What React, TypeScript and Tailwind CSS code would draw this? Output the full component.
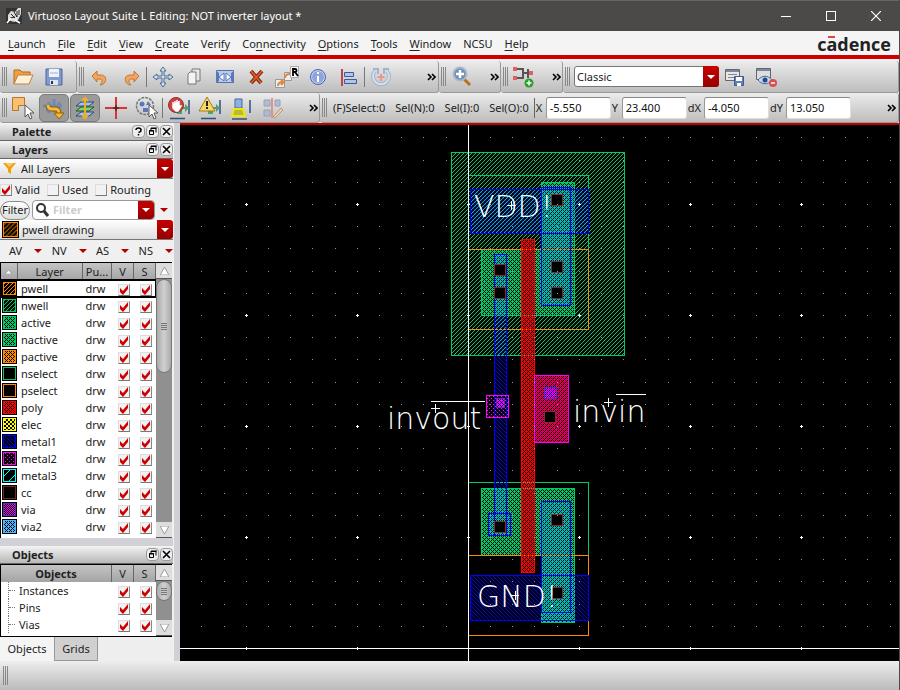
import React from "react";
import type { ReactNode } from "react";

/* ---------- shared bits ---------- */

const Grip = () => (
  <span className="flex h-[19px] shrink-0 gap-px">
    <i className="w-px bg-[#888]" />
    <i className="w-px bg-[#888]" />
    <i className="w-px bg-[#888]" />
  </span>
);

const Sep = () => <span className="h-5 w-px shrink-0 bg-[#777]" />;

const Bar = ({ children, className = "" }: { children: ReactNode; className?: string }) => (
  <div
    className={`flex items-center rounded-[3px] border-r border-b border-[#999] bg-linear-to-b from-[#ececec] to-[#bdbdbd] pl-[2px] ${className}`}
  >
    <Grip />
    {children}
  </div>
);

const Tool = ({ label, pressed = false, children }: { label: string; pressed?: boolean; children: ReactNode }) => (
  <button aria-label={label} className="flex h-7 w-[31px] shrink-0 items-center justify-center">
    <span className={pressed ? "flex rounded-[5px] border border-[#7c7c7c] bg-[#9a9a9a] px-[2px] py-[1px]" : "flex"}>
      <svg width="24" height="24" viewBox="0 0 24 24" fill="none">
        {children}
      </svg>
    </span>
  </button>
);

const More = () => (
  <button aria-label="More" className="flex w-3 shrink-0 items-center justify-center">
    <svg width="9" height="8" viewBox="0 0 9 8" fill="none" stroke="#000" strokeWidth="1.6">
      <path d="M1 1l3 3-3 3M5 1l3 3-3 3" />
    </svg>
  </button>
);

const RedArrow = ({ className = "" }: { className?: string }) => (
  <span
    className={`pointer-events-none flex w-4 items-center justify-center rounded-r-[3px] bg-linear-to-b from-[#c80000] to-[#960000] ${className}`}
  >
    <svg width="8" height="4" viewBox="0 0 8 4">
      <path d="M0 0h8L4 4z" fill="#fff" />
    </svg>
  </span>
);

const Check = ({ label, checked = true }: { label: string; checked?: boolean }) => (
  <span className="inline-grid size-3 align-middle">
    <input
      type="checkbox"
      aria-label={label}
      defaultChecked={checked}
      className="peer col-start-1 row-start-1 size-3 appearance-none border border-[#ddd] border-r-[#888] border-b-[#777] bg-[#f2f2f2]"
    />
    <svg
      viewBox="0 0 12 12"
      className="pointer-events-none invisible col-start-1 row-start-1 size-3 peer-checked:visible"
    >
      <path d="M2 4l3 3 5-6v4L5 11 2 8z" fill="#d00000" />
    </svg>
  </span>
);

/* ---------- title and menu ---------- */

const TitleBar = () => (
  <header className="flex h-[31px] shrink-0 items-center border-t border-[#666] bg-[#4c4a48] text-white">
    <svg width="16" height="16" viewBox="0 0 16 16" className="ml-[6px] mr-[6px]">
      <rect width="16" height="16" fill="#333" />
      <path d="M2 12V7l3-4 4 1 3-4h3v6l-3 6-4 2z" fill="#ddd" />
      <path d="M5 6l4 4M8 4l3 5M4 10l5-1M11 3v6M13 2v5" stroke="#222" />
      <path d="M1 15l4-5M9 12l5 3" stroke="#fff" strokeWidth="1.500" />
    </svg>
    <h1 className="flex-1">Virtuoso Layout Suite L Editing: NOT inverter layout *</h1>
    <button aria-label="Minimize" className="flex w-[45px] justify-center">
      <svg width="10" height="10" shapeRendering="crispEdges"><path d="M0 5h10" stroke="#fff" /></svg>
    </button>
    <button aria-label="Maximize" className="flex w-[45px] justify-center">
      <svg width="10" height="10" shapeRendering="crispEdges"><path d="M.5.5h9v9h-9z" stroke="#fff" fill="none" /></svg>
    </button>
    <button aria-label="Close" className="flex w-[46px] justify-center">
      <svg width="10" height="10"><path d="M0 0l10 10M10 0L0 10" stroke="#fff" strokeWidth="1.2" /></svg>
    </button>
  </header>
);

const menus: [string, string, string][] = [
  ["", "L", "aunch"],
  ["", "F", "ile"],
  ["", "E", "dit"],
  ["", "V", "iew"],
  ["", "C", "reate"],
  ["Veri", "f", "y"],
  ["Co", "n", "nectivity"],
  ["", "O", "ptions"],
  ["", "T", "ools"],
  ["", "W", "indow"],
  ["NCSU", "", ""],
  ["", "H", "elp"],
];

const MenuBar = () => (
  <nav className="flex h-6 shrink-0 items-center gap-3 bg-[#f4f4f4] px-2 pt-[2px]">
    {menus.map(([a, b, c]) => (
      <button key={a + b + c}>
        {a}
        <span className="underline underline-offset-2">{b}</span>
        {c}
      </button>
    ))}
    <span className="relative ml-auto font-['Open_Sans'] text-[18px] leading-5 font-bold text-[#222]">
      cadence
      <i className="absolute top-[2px] left-[11px] h-[2px] w-[7px] bg-[#e04040]" />
    </span>
  </nav>
);

/* ---------- toolbars ---------- */

const FileTools = () => (
  <Bar className="w-[77px]">
    <Tool label="Open">
      <path d="M3 19V5h6l2 2h8v3" fill="#f0a040" stroke="#b06a20" />
      <path d="M3 19l4-9h15l-4 9z" fill="#fff0d8" stroke="#c08040" />
    </Tool>
    <Tool label="Save">
      <path d="M4 4h16v16H4z" fill="#7f9ccc" stroke="#4c64a0" />
      <path d="M7 4h10v8H7z" fill="#eef3fb" />
      <path d="M8 15h8v5H8z" fill="#dfe6f0" />
      <path d="M10 16v3" stroke="#334" strokeWidth="2" />
      <path d="M8 8h8" stroke="#9db3d6" />
    </Tool>
  </Bar>
);

const EditTools = () => (
  <Bar className="w-[362px]">
    <Tool label="Undo">
      <path d="M9 6v4h3c5 0 7 3 5 7-1 2-3 3-5 3 3-3 3-6-1-6H9v3L4 11z" fill="#f4a460" stroke="#c07830" />
    </Tool>
    <Tool label="Redo">
      <path d="M15 6v4h-3c-5 0-7 3-5 7 1 2 3 3 5 3-3-3-3-6 1-6h2v3l5-6z" fill="#f4a460" stroke="#c07830" />
    </Tool>
    <Sep />
    <Tool label="Move">
      <path d="M12 2l3 4h-2v5h5V9l4 3-4 3v-2h-5v5h2l-3 4-3-4h2v-5H6v2l-4-3 4-3v2h5V6H9z" fill="#cfe4f2" stroke="#4a6a8c" />
    </Tool>
    <Tool label="Copy">
      <path d="M10 4h8v12h-8z" fill="#e8e8e8" stroke="#777" />
      <path d="M6 9l2-2h6v12H6z" fill="#f4f4f4" stroke="#777" />
    </Tool>
    <Tool label="Stretch">
      <path d="M3.500 5.500h17v12h-17z" fill="#b8ccee" stroke="#5570a8" />
      <path d="M3 6l3 2v8l-3 2zM21 6l-3 2v8l3 2z" fill="#5878b8" />
      <path d="M11 8v8l-5-4zM13 8v8l5-4z" fill="#fff" stroke="#5878b8" />
    </Tool>
    <Tool label="Delete">
      <path d="M7 6l10 12M18 6L7 18" stroke="#8b2a10" strokeWidth="4" />
      <path d="M7 6l10 12M18 6L7 18" stroke="#e0622c" strokeWidth="1.500" />
    </Tool>
    <Tool label="Rotate">
      <path d="M9.500 7.500h7v8h-7zM.5 14.500h9v8h-9z" fill="#eee" stroke="#999" />
      <path d="M15.500 1.500h8v11h-8z" fill="#f8f8f8" stroke="#aaa" />
      <path d="M3 21c0-3 2-4 5-4M10 13c0-3 2-4 5-4M6 15l3 2-3 3" stroke="#e08840" strokeWidth="2" />
      <path d="M18 11V4h2c2 0 2 3 0 3h-2M20 7l3 4" stroke="#000" strokeWidth="1.800" />
    </Tool>
    <Tool label="Properties">
      <circle cx="12" cy="12" r="7.500" fill="#c4d0f4" stroke="#4d62a8" />
      <circle cx="12" cy="12" r="6" fill="#8fa3dc" />
      <path d="M12 7v2M12 11v6" stroke="#fff" strokeWidth="2" />
    </Tool>
    <Tool label="Align">
      <path d="M5 4v17" stroke="#b84848" strokeWidth="2" />
      <path d="M7.500 7.500h9v4h-9zM7.500 14.500h12v4h-12z" fill="#b0c4ec" stroke="#3f5a98" />
    </Tool>
    <Sep />
    <Tool label="Reset">
      <path d="M6 6a8 8 0 1 0 12 0" stroke="#a0b4cc" strokeWidth="4" />
      <path d="M6 6a8 8 0 1 0 12 0" stroke="#d4e0ec" strokeWidth="2" />
      <path d="M4 4h5v5M20 4h-5v5" stroke="#a0b4cc" strokeWidth="2" />
      <path d="M12 9v7M8.500 12h7" stroke="#e89890" strokeWidth="2" />
    </Tool>
    <span className="ml-auto flex pr-[1px]"><More /></span>
  </Bar>
);

const ZoomTools = () => (
  <Bar className="w-[62px]">
    <Tool label="Zoom in">
      <path d="M14 14l6 6" stroke="#b87020" strokeWidth="3" />
      <circle cx="10" cy="9" r="6.500" fill="#6c90b8" stroke="#a8b8c8" strokeWidth="2" />
      <path d="M10 5v8M6 9h8" stroke="#fff" strokeWidth="2.500" />
    </Tool>
    <span className="ml-auto flex"><More /></span>
  </Bar>
);

const NetTools = () => (
  <Bar className="w-[62px]">
    <Tool label="Add net">
      <path d="M5 4h6v9H5M11 8h5M16 4v9M16 8h5" stroke="#555" strokeWidth="2" />
      <path d="M1 2h4v4H1zM1 11h4v4H1zM17 6h4v4h-4z" fill="#e06060" />
      <circle cx="17" cy="18" r="4.500" fill="#28a028" />
      <path d="M17 15.500v5M14.500 18h5" stroke="#fff" strokeWidth="1.500" />
    </Tool>
    <span className="ml-auto flex"><More /></span>
  </Bar>
);

const WorkspaceTools = () => (
  <Bar className="flex-1">
    <span className="ml-1 grid w-[145px] grid-cols-[1fr]">
      <select
        aria-label="Workspace"
        className="col-start-1 row-start-1 h-[21px] appearance-none rounded-[3px] border border-[#777] bg-white pl-[2px] text-[#222]"
      >
        <option>Classic</option>
      </select>
      <RedArrow className="col-start-1 row-start-1 justify-self-end" />
    </span>
    <Tool label="Save workspace">
      <path d="M2.500 4.500h14v11h-14z" fill="#e8e8e8" stroke="#666" />
      <path d="M3 5h13v2H3z" fill="#7888a8" />
      <path d="M5 9.500h9M5 12.500h9" stroke="#888" />
      <path d="M11.500 11.500h9v9h-9z" fill="#6080b8" stroke="#405890" />
      <path d="M13 12h6v4h-6zM14 18h4v3h-4z" fill="#fff" />
    </Tool>
    <Tool label="Hide workspace">
      <path d="M2.500 3.500h14v11h-14z" fill="#ddd" stroke="#666" />
      <path d="M3 4h13v2H3z" fill="#7888a8" />
      <path d="M4 15c4-5 10-5 14 0-4 5-10 5-14 0z" fill="#c8d8f0" stroke="#4868a0" />
      <circle cx="11" cy="15" r="2.500" fill="#284880" />
      <circle cx="19" cy="18" r="4" fill="#d85050" />
      <path d="M17 18h4" stroke="#fff" strokeWidth="1.500" />
    </Tool>
  </Bar>
);

const cursor = "M14 9v12l3-3 2 5 2-1-2-5h4z";

const ModeTools = () => (
  <Bar className="w-[320px]">
    <Tool label="Select">
      <path d="M1.500 1.500h12v8h-6v5h-6z" fill="#f8c070" stroke="#b07828" />
      <path d={cursor} fill="#fff" stroke="#555" />
    </Tool>
    <Tool label="Stretch mode" pressed>
      <path d="M1 10h19M4 14h14M7 6v11M12 3v13M17 6v8" stroke="#7088b4" strokeWidth="3" />
      <path d="M6 9q0 4 4 4h4q3 0 3 5" stroke="#8a6010" strokeWidth="5" />
      <path d="M6 9q0 4 4 4h4q3 0 3 5" stroke="#f8b830" strokeWidth="3" />
      <path d="M12 17l5 6 5-6z" fill="#f8b830" stroke="#8a6010" />
    </Tool>
    <Tool label="Hierarchy" pressed>
      <path d="M3 10l5-4h13l-5 4zM3 20l5-4h13l-5 4z" fill="#a0c0f0" stroke="#304878" />
      <path d="M3 15l5-4h13l-5 4z" fill="#80d080" stroke="#205820" />
      <path d="M12 2v20M9 5l3-3 3 3M9 19l3 3 3-3" stroke="#f0b020" strokeWidth="2" />
    </Tool>
    <Tool label="Crosshair">
      <path d="M12 1v22M1 12h22" stroke="#e03030" strokeWidth="2" />
      <path d="M12 9v6M9 12h6" stroke="#222" strokeWidth="1" />
    </Tool>
    <Tool label="Area select">
      <circle cx="10" cy="10" r="8.500" stroke="#777" strokeDasharray="3 1" strokeWidth="1.500" />
      <circle cx="7" cy="8" r="2.500" fill="#5c78b8" />
      <path d="M13 5l3 4h-5zM8 12h5v4H8z" fill="#5c78b8" />
      <path d={cursor} fill="#fff" stroke="#555" />
    </Tool>
    <Sep />
    <Tool label="Halt rule">
      <path d="M22 4v14M3 22.500h15" stroke="#305080" strokeWidth="1.500" />
      <path d="M12 11h6V8l4 4-4 4v-3h-3v5h-5v-5z" fill="#50a070" />
      <circle cx="9" cy="9" r="7.500" fill="#d04040" stroke="#903030" />
      <path d="M6 8v4l3 3h2l3-5-2 0V5M10 9V4M8 9V5M6 10V6" stroke="#fff" strokeWidth="1.500" fill="#fff" />
    </Tool>
    <Tool label="Warn rule">
      <path d="M22 4v14M3 22.500h15" stroke="#305080" strokeWidth="1.500" />
      <path d="M12 11h6V8l4 4-4 4v-3h-3v5h-5v-5z" fill="#50a070" />
      <path d="M9 1l8 14H1z" fill="#f8d860" stroke="#a08020" />
      <path d="M9 5v5M9 11v2" stroke="#222" strokeWidth="2" />
    </Tool>
    <Tool label="Highlight">
      <path d="M6 3h7v9H6z" fill="#8cb0e8" stroke="#486898" />
      <path d="M5 13h9l2 7H3z" fill="#b8b840" stroke="#f0e800" strokeWidth="2" />
      <path d="M21 4v13M3 23h15" stroke="#305080" strokeWidth="1.500" />
    </Tool>
    <Tool label="Edit pins">
      <path d="M4 4h6v6H4zM4 14h6v6H4zM15 4h5v6h-5z" fill="#b0bcd0" stroke="#94a0b8" />
      <path d="M12 2v20" stroke="#e09090" strokeWidth="2" />
      <path d="M13 21l8-9 2 2-8 8z" fill="#e8d0b0" stroke="#b89878" />
    </Tool>
    <span className="ml-auto flex"><More /></span>
  </Bar>
);

const Coord = ({ name, value }: { name: string; value: string }) => (
  <label className="flex items-center gap-[3px]">
    <span className="min-w-[7px]">{name}</span>
    <input
      defaultValue={value}
      className="h-[22px] w-[65px] rounded-[3px] border border-[#ddd] border-t-[#888] border-l-[#999] bg-white px-[3px] text-[#111]"
    />
  </label>
);

const StatusTools = () => (
  <Bar className="min-w-0 flex-1 text-[#222]">
    <span className="ml-[6px] flex gap-[10px] whitespace-nowrap">
      <span>(F)Select:0</span>
      <span>Sel(N):0</span>
      <span>Sel(I):0</span>
      <span>Sel(O):0</span>
    </span>
    <span className="ml-[5px] mr-px h-5 w-px bg-[#666]" />
    <span className="flex gap-px">
      <Coord name="X" value="-5.550" />
      <Coord name="Y" value="23.400" />
      <Coord name="dX" value="-4.050" />
      <Coord name="dY" value="13.050" />
    </span>
    <span className="ml-auto flex pr-px"><More /></span>
  </Bar>
);

/* ---------- swatches ---------- */

const G = "#00cc66";
const O = "#ff8c00";

/* Stipple patterns shared by the layer swatches and the layout. */
const Patterns = () => (
  <svg width="0" height="0" className="absolute">
    <defs>
      {[["hg", G], ["ho", O]].map(([id, c]) => (
        <pattern key={id} id={id} x="1" width="4" height="4" patternUnits="userSpaceOnUse">
          <path d="M3 0h1v1h-1zM2 1h1v1h-1zM1 2h1v1h-1zM0 3h1v1h-1z" fill={c} />
        </pattern>
      ))}
      {[["dg", G], ["do", O], ["dr", "#ff0000"], ["ds", "#50b4ff"]].map(([id, c]) => (
        <pattern key={id} id={id} width="4" height="4" patternUnits="userSpaceOnUse">
          <path d="M0 0h1v1h-1zM2 0h1v1h-1zM0 1h2v1h-2zM3 1h1v1h-1zM0 2h1v1h-1zM2 2h1v1h-1zM1 3h3v1h-3z" fill={c} />
        </pattern>
      ))}
      <pattern id="cm" width="2" height="2" patternUnits="userSpaceOnUse">
        <path d="M0 0h1v1h-1zM1 1h1v1h-1z" fill="#ff00ff" />
      </pattern>
      <pattern id="cy" width="4" height="4" patternUnits="userSpaceOnUse">
        <path d="M0 0h2v2h-2zM2 2h2v2h-2z" fill="#ffff00" />
      </pattern>
      <pattern id="m1" x="1" width="4" height="4" patternUnits="userSpaceOnUse">
        <path d="M0 0h1v1h-1zM1 1h1v1h-1zM2 2h1v1h-1zM3 3h1v1h-1z" fill="#0000ff" />
      </pattern>
      <pattern id="m2" x="1" width="4" height="4" patternUnits="userSpaceOnUse">
        <path d="M0 0h1v1h-1zM2 2h1v1h-1z" fill="#ff00ff" />
      </pattern>
      <pattern id="m3" width="10" height="10" patternUnits="userSpaceOnUse">
        <path d="M0 10L10 0" stroke="#00ffff" />
      </pattern>
    </defs>
  </svg>
);

const Swatch = ({ fill, stroke, size = 15 }: { fill: string; stroke: string; size?: number }) => (
  <svg width={size} height={size} viewBox="0 0 15 15" shapeRendering="crispEdges" className="block shrink-0">
    <rect width="15" height="15" fill="#000" />
    <rect x="1.500" y="1.500" width="12" height="12" fill={fill} stroke={stroke} />
  </svg>
);

/* ---------- left dock ---------- */

const DockButton = ({ label, children }: { label: string; children: ReactNode }) => (
  <button aria-label={label} className="flex size-[13px] items-center justify-center rounded-[4px] border border-[#999] bg-[#eee]">
    <svg width="9" height="9" viewBox="0 0 9 9" fill="none" stroke="#000">{children}</svg>
  </button>
);

const DockHeader = ({ title, help = false }: { title: string; help?: boolean }) => (
  <div className="flex h-[18px] shrink-0 items-center gap-px border-b border-[#666] bg-linear-to-b from-[#f4f4f4] to-[#b8b8b8] pl-3 font-bold text-[#222]">
    <h2 className="flex-1">{title}</h2>
    {help && (
      <DockButton label="Help"><path d="M2 3q0-2 2.500-2T7 3t-2.500 2.500M4.500 7v1.500" strokeWidth="1.500" /></DockButton>
    )}
    <DockButton label="Float"><path d="M3 1.500h5v4M3 1v2M1.500 3.500h4v4h-4zM1 4h5M3 1h6" /></DockButton>
    <DockButton label="Close"><path d="M1 1l7 7M8 1L1 8" strokeWidth="1.600" /></DockButton>
  </div>
);

const layers: [string, string, string][] = [
  ["pwell", "url(#ho)", O],
  ["nwell", "url(#hg)", G],
  ["active", "url(#dg)", G],
  ["nactive", "url(#dg)", G],
  ["pactive", "url(#do)", O],
  ["nselect", "#000", G],
  ["pselect", "#000", O],
  ["poly", "url(#dr)", "#ff0000"],
  ["elec", "url(#cy)", "#ffff00"],
  ["metal1", "url(#m1)", "#0000ff"],
  ["metal2", "url(#m2)", "#ff00ff"],
  ["metal3", "url(#m3)", "#00ffff"],
  ["cc", "#000", "#6e2828"],
  ["via", "url(#cm)", "#5030b0"],
  ["via2", "url(#ds)", "#50b4ff"],
];

const ScrollBar = ({ thumb }: { thumb: string }) => (
  <div aria-hidden="true" className="flex w-4 shrink-0 flex-col bg-[#909090]">
    <span className="flex h-4 items-center justify-center border-b border-[#555] bg-[#ddd]">
      <svg width="9" height="8"><path d="M4.500 0L9 8H0z" fill="#fff" stroke="#999" /></svg>
    </span>
    <span className={`flex w-full flex-col items-center justify-center gap-px rounded-full border border-[#777] bg-linear-to-r from-[#aaa] via-[#d0d0d0] to-[#aaa] ${thumb}`}>
      <i className="h-px w-[6px] bg-[#777]" />
      <i className="h-px w-[6px] bg-[#777]" />
      <i className="h-px w-[6px] bg-[#777]" />
      <i className="h-px w-[6px] bg-[#777]" />
    </span>
    <span className="mt-auto flex h-4 items-center justify-center border-b border-[#555] bg-[#ddd]">
      <svg width="9" height="8"><path d="M4.500 8L9 0H0z" fill="#fff" stroke="#999" /></svg>
    </span>
  </div>
);

const th = "border-r border-[#666] p-0 text-center font-normal";
const head = "h-[17px] bg-linear-to-b from-[#c4c4c4] to-[#a4a4a4]";

const LayersDock = () => (
  <section className="flex min-h-0 flex-1 flex-col">
    <DockHeader title="Layers" />
    <div className="grid h-5 shrink-0 border-b border-[#777] bg-linear-to-b from-white to-[#ddd]">
      <select aria-label="Layer set" className="col-start-1 row-start-1 appearance-none pl-[21px]">
        <option>All Layers</option>
      </select>
      <svg width="13" height="13" className="pointer-events-none col-start-1 row-start-1 ml-[3px] self-center">
        <path d="M0 1h13L8 7v5l-3-2V7z" fill="#f0a000" />
        <path d="M2 1h9L6.500 5z" fill="#f8c860" />
      </svg>
      <RedArrow className="col-start-1 row-start-1 justify-self-end" />
    </div>
    <div className="flex h-[21px] shrink-0 items-center gap-[7px]">
      <label className="flex items-center gap-[3px]"><Check label="Valid" />Valid</label>
      <label className="flex items-center gap-[3px]"><Check label="Used" checked={false} />Used</label>
      <label className="flex items-center gap-[3px]"><Check label="Routing" checked={false} />Routing</label>
    </div>
    <div className="flex h-5 shrink-0 items-center">
      <button className="h-[19px] w-[30px] rounded-full border border-[#888] bg-linear-to-b from-white to-[#ddd] text-center">Filter</button>
      <span className="ml-[2px] flex h-5 w-[123px] items-stretch overflow-hidden rounded-[4px] border border-[#999] bg-white">
        <svg width="18" height="18" fill="none" stroke="#333">
          <circle cx="8" cy="7" r="4" strokeWidth="2" />
          <path d="M11 10l4 5" strokeWidth="3" />
        </svg>
        <input aria-label="Filter layers" placeholder="Filter" className="min-w-0 flex-1 pl-[2px] font-bold placeholder:text-[#ccc]" />
        <RedArrow />
      </span>
      <svg width="8" height="4" className="mx-auto"><path d="M0 0h8L4 4z" fill="#b00000" /></svg>
    </div>
    <div className="grid h-5 shrink-0 border-b border-[#777] bg-linear-to-b from-white to-[#ddd]">
      <select aria-label="Current layer" className="col-start-1 row-start-1 appearance-none pl-[22px]">
        <option>pwell drawing</option>
      </select>
      <span className="pointer-events-none col-start-1 row-start-1 ml-[2px] self-center"><Swatch fill="url(#ho)" stroke={O} size={17} /></span>
      <RedArrow className="col-start-1 row-start-1 justify-self-end" />
    </div>
    <div className="flex h-[22px] shrink-0 items-center justify-between pl-[9px]">
      {["AV", "NV", "AS", "NS"].map((n) => (
        <button key={n} className="flex items-center gap-3">
          {n}
          <svg width="8" height="4"><path d="M0 0h8L4 4z" fill="#b00000" /></svg>
        </button>
      ))}
    </div>
    <div className="mr-px flex min-h-0 flex-1 overflow-hidden border-t border-l border-black bg-white">
      <div className="min-w-0 flex-1 overflow-hidden">
        <table className="w-full table-fixed border-collapse">
          <thead>
            <tr className={head}>
              <th className={`w-4 ${th}`} aria-label="Sort">
                <svg width="7" height="4" className="mx-auto"><path d="M0 4h7L3.500 0z" fill="#fff" stroke="#777" strokeWidth=".5" /></svg>
              </th>
              <th className={th}>Layer</th>
              <th className={`w-[29px] ${th}`}>Pu...</th>
              <th className={`w-[22px] ${th}`}>V</th>
              <th className={`w-[22px] ${th}`}>S</th>
            </tr>
          </thead>
          <tbody>
            {layers.map(([name, fill, stroke], i) => (
              <tr key={name} className={i === 0 ? "h-[17px] outline-2 -outline-offset-1 outline-black" : "h-[17px]"}>
                <td className="p-0 pl-px"><Swatch fill={fill} stroke={stroke} /></td>
                <td className="p-0 pl-1">{name}</td>
                <td className="p-0 pl-[3px]">drw</td>
                <td className="p-0 pl-[2px] text-center"><Check label={`${name} visible`} /></td>
                <td className="p-0 pl-[2px] text-center"><Check label={`${name} selectable`} /></td>
              </tr>
            ))}
          </tbody>
        </table>
      </div>
      <ScrollBar thumb="h-[94px]" />
    </div>
  </section>
);

const ObjectsDock = () => (
  <section className="shrink-0">
    <DockHeader title="Objects" />
    <div className="mr-px flex h-[73px] overflow-hidden border-y border-l border-black bg-white">
      <div className="min-w-0 flex-1">
        <table className="w-full table-fixed border-collapse">
          <thead>
            <tr className={head}>
              <th className="border-r border-[#666] p-0 text-center font-bold">Objects</th>
              <th className={`w-[22px] ${th}`}>V</th>
              <th className={`w-[22px] ${th}`}>S</th>
            </tr>
          </thead>
          <tbody>
            {["Instances", "Pins", "Vias"].map((name) => (
              <tr key={name} className="h-[17px]">
                <td className="p-0">
                  <span className="ml-[7px] flex h-[17px] items-center gap-1 border-l border-dotted border-[#777]">
                    <i className="w-[6px] border-t border-dotted border-[#777]" />
                    {name}
                  </span>
                </td>
                <td className="p-0 pl-[2px] text-center"><Check label={`${name} visible`} /></td>
                <td className="p-0 pl-[2px] text-center"><Check label={`${name} selectable`} /></td>
              </tr>
            ))}
          </tbody>
        </table>
      </div>
      <ScrollBar thumb="h-5" />
    </div>
    <div className="flex h-6 bg-[#eee]">
      <button className="w-[55px] border-r border-[#999] bg-[#f4f4f4]">Objects</button>
      <button className="w-[43px] border-r border-b border-[#999] bg-[#d0d0d0]">Grids</button>
    </div>
  </section>
);

/* ---------- layout canvas ---------- */

const Box = ({ x, y, x2, y2, c, f = "none" }: { x: number; y: number; x2: number; y2: number; c: string; f?: string }) => (
  <rect x={x + 0.5} y={y + 0.5} width={x2 - x} height={y2 - y} stroke={c} fill={f} />
);

const contacts = [
  [551, 194], [551, 261], [551, 287], [494, 264], [494, 287],
  [544, 411], [494, 521], [551, 514], [551, 587],
];

const LayoutView = () => (
  <main className="min-w-0 flex-1 overflow-hidden bg-black">
    <svg width="100%" height="100%" className="block" role="img" aria-label="Inverter layout">
      <defs>
        <pattern id="grid" x="468" y="93" width="111" height="111" patternUnits="userSpaceOnUse">
          {[0, 22, 44, 67, 89].map((y) =>
            [0, 22, 44, 66, 89].map((x) => <rect key={`${x}-${y}`} x={x} y={y} width="1" height="1" fill="#9090b0" />),
          )}
        </pattern>
        <pattern id="major" x="467" y="92" width="111" height="111" patternUnits="userSpaceOnUse">
          <path d="M0 1.500h3M1.500 0v3" stroke="#fff" />
        </pattern>
      </defs>
      <g transform="translate(-180 -125)" shapeRendering="crispEdges">
        <Box x={451} y={152} x2={624} y2={355} c={G} f="url(#hg)" />
        <path d="M468 175.500h120.500v74M468 555.500v-73h120.500v73" stroke={G} fill="none" />
        <rect x="481" y="249" width="94" height="67" fill="url(#dg)" />
        <rect x="541" y="182" width="34" height="67" fill="url(#dg)" />
        <rect x="481" y="488" width="94" height="67" fill="url(#dg)" />
        <rect x="541" y="555" width="34" height="67" fill="url(#dg)" />
        <path d="M481.500 315.500v-66h60v-67h33v133zM481.500 555.500v-67h93v134h-33v-67z" stroke={G} fill="none" />
        <Box x={468} y={249} x2={588} y2={329} c={O} />
        <Box x={468} y={555} x2={588} y2={635} c={O} />
        <rect x="521" y="239" width="14" height="334" fill="url(#dr)" />
        <Box x={521} y={239} x2={534} y2={572} c="#ff0000" />
        <Box x={470} y={189} x2={588} y2={233} c="#0000ff" f="url(#m1)" />
        <Box x={541} y={187} x2={570} y2={305} c="#0000ff" f="url(#m1)" />
        <Box x={494} y={254} x2={506} y2={535} c="#0000ff" f="url(#m1)" />
        <Box x={488} y={513} x2={510} y2={535} c="#0000ff" f="url(#m1)" />
        <Box x={541} y={501} x2={570} y2={612} c="#0000ff" f="url(#m1)" />
        <Box x={470} y={575} x2={588} y2={620} c="#0000ff" f="url(#m1)" />
        <rect x="534" y="375" width="34" height="67" fill="url(#dr)" />
        <rect x="534" y="375" width="34" height="67" fill="url(#m1)" />
        <Box x={534} y={375} x2={568} y2={442} c="#ff00ff" />
        <Box x={486} y={395} x2={508} y2={417} c="#ff00ff" f="url(#m2)" />
        <Box x={496} y={398} x2={504} y2={407} c="#5030b0" f="url(#cm)" />
        <Box x={544} y={387} x2={556} y2={398} c="#5030b0" f="url(#cm)" />
        {contacts.map(([x, y]) => (
          <Box key={`${x}-${y}`} x={x} y={y} x2={x + 11} y2={y + 11} c="#8c2828" f="#000" />
        ))}
        <rect x="180" y="125" width="100%" height="100%" fill="url(#grid)" />
        <rect x="180" y="125" width="100%" height="100%" fill="url(#major)" />
        <path
          d="M468.500 125v3000M180 648.500h3000M431 401.500h54M616 394.500h30M507 205.500h9M511.500 201v9M511 595.500h8M515.500 591v9M431 408.500h9M435.500 404v9M604 402.500h9M608.500 398v9"
          stroke="#fff"
        />
      </g>
      <g
        transform="translate(-180 -125)"
        fill="#fff"
        className="font-['DejaVu_Sans_Light','DejaVu_Sans','Inter',sans-serif] text-[30px] font-extralight"
      >
        <text x="474" y="217">VDD!</text>
        <text x="477" y="607">GND!</text>
        <text x="387" y="429">invout</text>
        <text x="573" y="422">invin</text>
      </g>
    </svg>
  </main>
);

export default function App() {
  return (
    <div className="flex h-screen min-h-[560px] flex-col overflow-hidden border-r border-[#4c4a48] bg-[#f0f0f0] font-['Noto_Sans',sans-serif] text-[11px] leading-4 text-[#222]">
      <Patterns />
      <TitleBar />
      <MenuBar />
      <div className="h-1 shrink-0 bg-[#d00000]" />
      <div className="flex h-[34px] shrink-0 pt-[2px]">
        <FileTools />
        <EditTools />
        <ZoomTools />
        <NetTools />
        <WorkspaceTools />
      </div>
      <div className="flex h-[30px] shrink-0">
        <ModeTools />
        <StatusTools />
      </div>
      <div className="flex min-h-0 flex-1">
        <aside className="flex w-[180px] shrink-0 flex-col border-r-[6px] border-[#d0d0d6] pr-px">
          <DockHeader title="Palette" help />
          <LayersDock />
          <div className="h-2 shrink-0 bg-[#d0d0d6]" />
          <ObjectsDock />
        </aside>
        <div className="flex min-w-0 flex-1 flex-col">
          <div className="h-[2px] shrink-0 bg-[#c00000]" />
          <LayoutView />
        </div>
      </div>
      <footer className="flex h-[29px] shrink-0 items-center bg-linear-to-b from-[#eee] to-[#bbb] pl-[3px]">
        <Grip />
      </footer>
    </div>
  );
}
